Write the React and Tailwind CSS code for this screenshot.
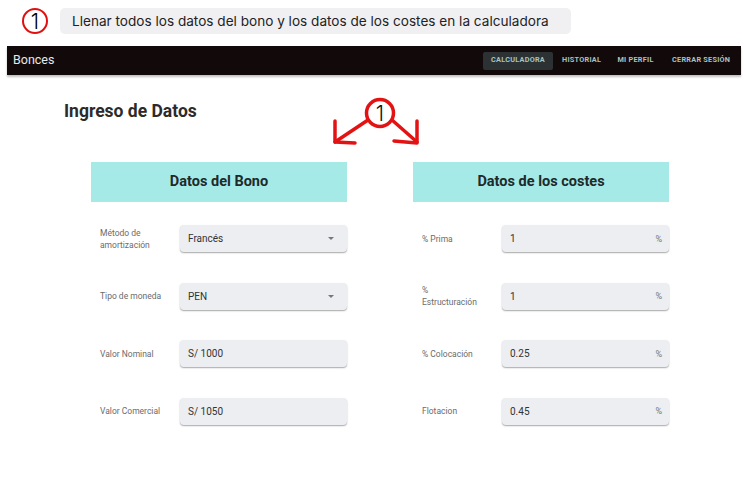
import React from 'react';

const bono = [
  { label: 'Método de amortización', value: 'Francés', select: true },
  { label: 'Tipo de moneda', value: 'PEN', select: true },
  { label: 'Valor Nominal', value: 'S/ 1000' },
  { label: 'Valor Comercial', value: 'S/ 1050' },
];

const costes = [
  { label: '% Prima', value: '1' },
  { label: '% Estructuración', value: '1', wrap: true },
  { label: '% Colocación', value: '0.25' },
  { label: 'Flotacion', value: '0.45' },
];

function Field({ row, suffix }) {
  return (
    <div className="flex items-center h-[27px] pl-[9px]">
      <div className="w-[80px] shrink-0 pr-2 text-[8.5px] leading-[12px] text-[#6b6b6b]">
        {row.wrap ? <>%<br />Estructuración</> : row.label}
      </div>
      <div className="flex-1 h-[27px] flex items-center justify-between px-2 bg-[#eceef1] rounded-[4px] shadow-[0_1px_1.5px_rgba(0,0,0,0.35)] text-[10px] text-[#333]">
        <span>{row.value}</span>
        {row.select && (
          <svg width="8" height="5" viewBox="0 0 8 5" className="mr-[4px]">
            <path d="M1 1 L4 4 L7 1 Z" fill="#777" />
          </svg>
        )}
        {suffix && <span className="text-[9px] text-[#777] mr-[-1px] mt-[2px]">{suffix}</span>}
      </div>
    </div>
  );
}

function Panel({ title, rows, suffix }) {
  return (
    <div className="w-[256px]">
      <div className="h-[40px] bg-[#a6eae8] flex items-center justify-center text-[14.5px] font-bold text-[#1d2b2b]">
        {title}
      </div>
      <div className="mt-[23px] flex flex-col gap-[30.5px]">
        {rows.map(r => (
          <Field key={r.label} row={r} suffix={suffix} />
        ))}
      </div>
    </div>
  );
}

export default function App() {
  return (
    <div className="w-[750px] h-[500px] bg-white overflow-hidden font-['Roboto',sans-serif]">
      <div className="flex items-center pt-[8px] pl-[22px] gap-[12px] font-['Inter',sans-serif]">
        <div className="w-[26px] h-[26px] rounded-full border-2 border-[#e01010] flex items-center justify-center text-[21px] leading-none text-black font-light">
          1
        </div>
        <div className="h-[26px] w-[511px] bg-[#f0f0f2] rounded-[5px] pl-[12px] flex items-center text-[13.6px] text-[#222]">
          Llenar todos los datos del bono y los datos de los costes en la calculadora
        </div>
      </div>

      <nav className="mt-[12px] mx-[7px] w-[734px] h-[29px] bg-[#120a0a] flex items-center justify-between pl-[6px] pr-[11px] shadow-[0_2px_2px_rgba(0,0,0,0.25)]">
        <span className="text-[12.5px] text-[#e8e8e8]">Bonces</span>
        <div className="flex items-center text-[7.3px] font-bold tracking-[0.25px] text-[#a9c2c0] whitespace-nowrap">
          <span className="h-[18px] w-[70px] flex items-center justify-center bg-[#2c3233] rounded-[2px]">CALCULADORA</span>
          <span className="ml-[9px] w-[38px] text-center">HISTORIAL</span>
          <span className="ml-[17px] w-[37px] text-center">MI PERFIL</span>
          <span className="ml-[18px] w-[58px] text-center">CERRAR SESIÓN</span>
        </div>
      </nav>

      <div className="relative">
        <h1 className="pl-[64px] pt-[24px] text-[17.5px] leading-[24px] font-bold text-[#2b2b2b]">Ingreso de Datos</h1>

        <svg className="absolute left-[325px] top-[20px]" width="104" height="54" viewBox="325 95 104 54">
          <g stroke="#e41313" strokeWidth="3.5" fill="none" strokeLinecap="round" strokeLinejoin="round">
            <circle cx="380" cy="113" r="13.5" fill="white" />
            <path d="M368 120 L335 142" />
            <path d="M335 121 L335 142 L355 143" />
            <path d="M392 120 L417 142" />
            <path d="M417 121 L417 143 L394 141" />
          </g>
          <text x="380" y="121" textAnchor="middle" fontSize="21" fontFamily="Inter, sans-serif" fontWeight="300" fill="#111">1</text>
        </svg>

        <div className="mt-[39px] flex pl-[91px] gap-[66px]">
          <Panel title="Datos del Bono" rows={bono} />
          <Panel title="Datos de los costes" rows={costes} suffix="%" />
        </div>
      </div>
    </div>
  );
}
